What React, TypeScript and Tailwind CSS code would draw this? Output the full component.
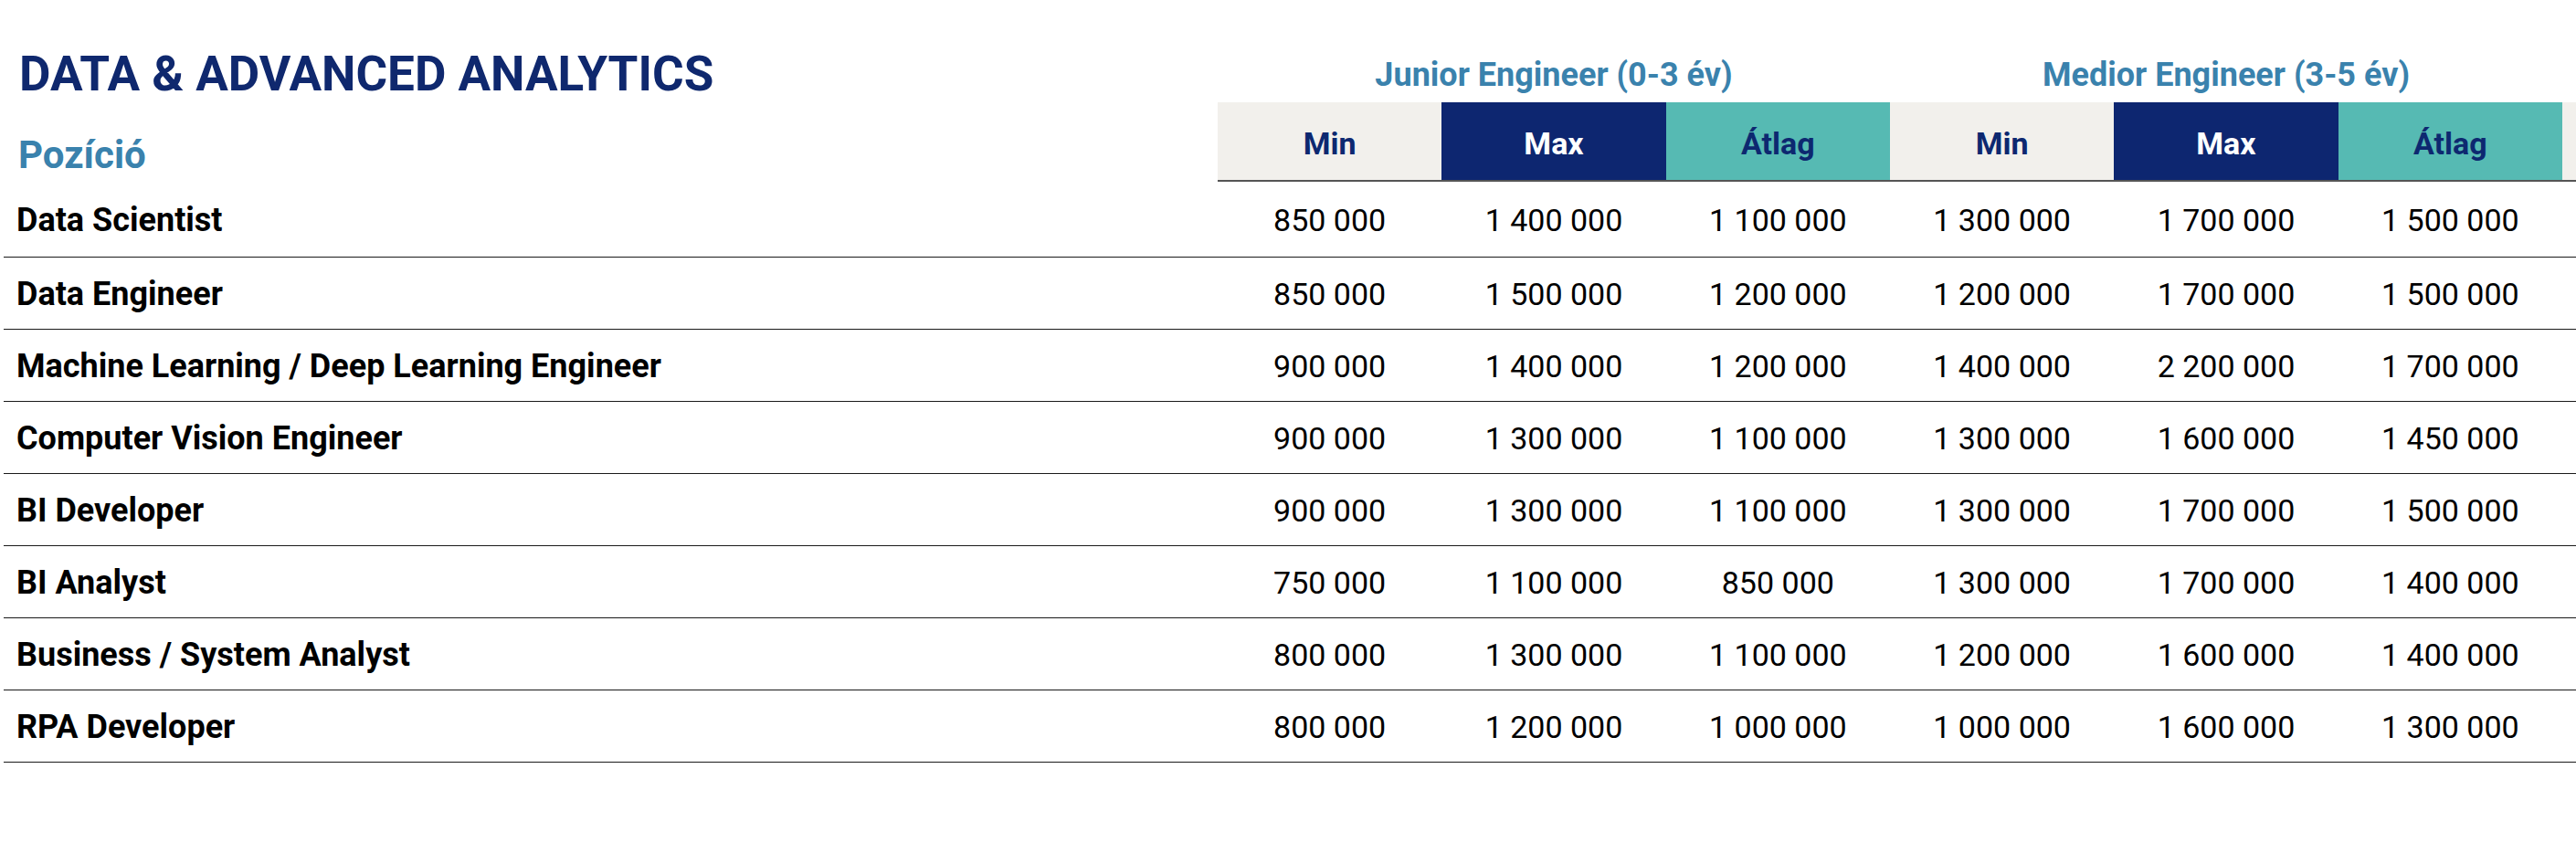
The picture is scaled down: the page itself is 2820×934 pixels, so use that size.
const rows: [string, string[]][] = [
  ['Data Scientist', ['850 000', '1 400 000', '1 100 000', '1 300 000', '1 700 000', '1 500 000']],
  ['Data Engineer', ['850 000', '1 500 000', '1 200 000', '1 200 000', '1 700 000', '1 500 000']],
  ['Machine Learning / Deep Learning Engineer', ['900 000', '1 400 000', '1 200 000', '1 400 000', '2 200 000', '1 700 000']],
  ['Computer Vision Engineer', ['900 000', '1 300 000', '1 100 000', '1 300 000', '1 600 000', '1 450 000']],
  ['BI Developer', ['900 000', '1 300 000', '1 100 000', '1 300 000', '1 700 000', '1 500 000']],
  ['BI Analyst', ['750 000', '1 100 000', '850 000', '1 300 000', '1 700 000', '1 400 000']],
  ['Business / System Analyst', ['800 000', '1 300 000', '1 100 000', '1 200 000', '1 600 000', '1 400 000']],
  ['RPA Developer', ['800 000', '1 200 000', '1 000 000', '1 000 000', '1 600 000', '1 300 000']],
];

const headCells = [
  { label: 'Min', cls: 'bg-[#f2f0ec] text-[#0d2870]' },
  { label: 'Max', cls: 'bg-[#0d2670] text-white' },
  { label: 'Átlag', cls: 'bg-[#56bab3] text-[#0d2870]' },
];

export default function App() {
  return (
    <div className="w-[2820px] h-[934px] bg-white font-['Roboto',sans-serif] overflow-hidden">
      {/* title + group captions */}
      <div className="flex h-[112px] items-end">
        <div className="w-[1333px] pl-[21px] pb-[4px]">
          <h1 className="text-[53px] leading-none font-bold text-[#0f286e]">DATA &amp; ADVANCED ANALYTICS</h1>
        </div>
        {['Junior Engineer (0-3 év)', 'Medior Engineer (3-5 év)'].map(g => (
          <div key={g} className="w-[736px] pb-[12px] text-center text-[36px] leading-none font-bold text-[#3a82ad]">
            {g}
          </div>
        ))}
      </div>

      {/* column header row */}
      <div className="flex h-[87px]">
        <div className="w-[1333px] flex items-end pl-[20px] pb-[8px]">
          <span className="text-[42px] leading-none font-bold text-[#3a82ad]">Pozíció</span>
        </div>
        <div className="flex flex-1 border-b-2 border-[#555]">
          {[0, 1].map(g =>
            headCells.map(c => (
              <div
                key={g + c.label}
                className={`w-[245.33px] flex items-center justify-center pt-[5px] text-[34px] leading-none font-bold ${c.cls}`}
              >
                {c.label}
              </div>
            ))
          )}
          <div className="flex-1 bg-[#f2f0ec]" />
        </div>
      </div>

      {/* data rows */}
      <div className="ml-[4px]">
        {rows.map(([name, vals], i) => (
          <div
            key={name}
            className={`flex items-center border-b border-[#1a1a1a] ${i === 0 ? 'h-[83px]' : 'h-[79px]'}`}
          >
            <div className="w-[1329px] pl-[14px] pt-[2px] text-[36px] leading-none font-bold text-black">{name}</div>
            {vals.map((v, j) => (
              <div key={j} className="w-[245.33px] pt-[2px] text-center text-[34px] leading-none text-black">
                {v}
              </div>
            ))}
          </div>
        ))}
      </div>
    </div>
  );
}
